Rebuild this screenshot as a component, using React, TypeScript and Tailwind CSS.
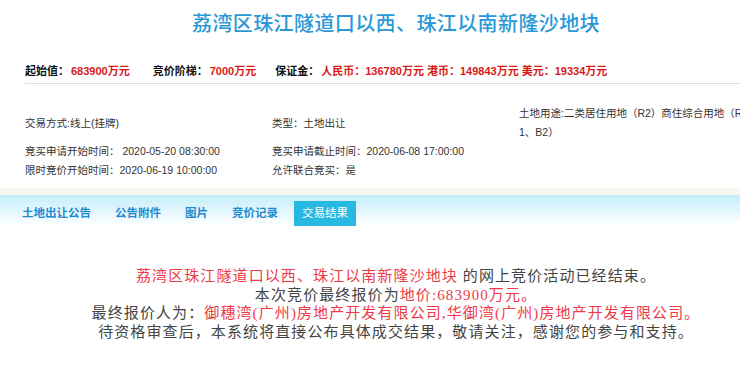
import React from "react";

const cjk = { fontFamily: '"Liberation Sans", "Noto Sans CJK SC", sans-serif' };
const serif = { fontFamily: '"Liberation Serif", "Noto Sans CJK SC", serif' };

export default function App() {
  return (
    <div className="w-[740px] h-[366px] overflow-hidden bg-white text-[#333]" style={cjk}>
      {/* Title */}
      <div className="pl-[52px] pt-[10px] text-center">
        <h1 className="text-[20px] leading-[28px] tracking-[0.4px] text-[#2a98d6] font-medium">
          荔湾区珠江隧道口以西、珠江以南新隆沙地块
        </h1>
      </div>

      {/* Price row */}
      <div className="ml-[25px] mt-[25px] pb-[4px] border-b border-[#dddddd] flex items-center text-[11px] leading-[16px] font-bold whitespace-nowrap">
        <span className="text-[#111]">起始值：</span>
        <span className="text-[#d81818] ml-[2px]">683900万元</span>
        <span className="text-[#111] ml-[23px]">竞价阶梯：</span>
        <span className="text-[#d81818] ml-[2px]">7000万元</span>
        <span className="text-[#111] ml-[19px]">保证金：</span>
        <span className="text-[#d81818] ml-[2px]">人民币：136780万元 港币：149843万元 美元：19334万元</span>
      </div>

      {/* Info grid */}
      <div className="ml-[25px] mt-[20px] grid grid-cols-[247px_247px_247px] text-[10.5px] leading-[19px] text-[#333] whitespace-nowrap">
        <div className="flex items-center">交易方式:线上(挂牌)</div>
        <div className="flex items-center">类型：土地出让</div>
        <div className="overflow-hidden">
          <div>土地用途:二类居住用地（R2）商住综合用地（R2</div>
          <div>1、B2）</div>
        </div>
        <div>竞买申请开始时间： 2020-05-20 08:30:00</div>
        <div>竞买申请截止时间：2020-06-08 17:00:00</div>
        <div></div>
        <div>限时竞价开始时间：2020-06-19 10:00:00</div>
        <div>允许联合竞买：是</div>
        <div></div>
      </div>

      {/* Tabs */}
      <div className="mt-[8px]">
        <div className="h-[7px] bg-[#f5f6f0]"></div>
        <div className="h-[31px] bg-gradient-to-b from-[#c4edfa] to-white flex items-end pl-[14px] gap-[8px] text-[11.5px] font-bold">
          <div className="h-[25px] px-[8px] flex items-center text-[#1d8bd1]">土地出让公告</div>
          <div className="h-[25px] px-[8px] flex items-center text-[#1d8bd1]">公告附件</div>
          <div className="h-[25px] px-[8px] flex items-center text-[#1d8bd1]">图片</div>
          <div className="h-[25px] px-[8px] flex items-center text-[#1d8bd1]">竞价记录</div>
          <div className="h-[25px] px-[8px] flex items-center bg-[#27b9e1] text-white font-normal">交易结果</div>
        </div>
      </div>

      {/* Result */}
      <div className="pl-[52px] mt-[41px] text-center text-[15px] leading-[18.5px] tracking-[1.1px] text-[#444] whitespace-nowrap" style={serif}>
        <div>
          <span className="text-[#ee3a48]">荔湾区珠江隧道口以西、珠江以南新隆沙地块</span> 的网上竞价活动已经结束。
        </div>
        <div>
          本次竞价最终报价为<span className="text-[#ee3a48]">地价:683900万元。</span>
        </div>
        <div>
          最终报价人为：<span className="text-[#ee3a48]">御穗湾(广州)房地产开发有限公司,华御湾(广州)房地产开发有限公司。</span>
        </div>
        <div>待资格审查后，本系统将直接公布具体成交结果，敬请关注，感谢您的参与和支持。</div>
      </div>
    </div>
  );
}
